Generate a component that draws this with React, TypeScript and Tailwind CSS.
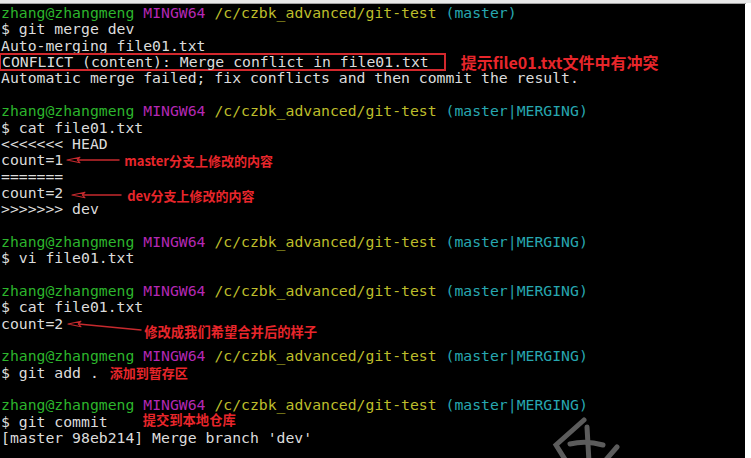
import React from 'react';

const mono = "font-['DejaVu_Sans_Mono','Liberation_Mono',monospace]";
const cn = "font-['Noto_Sans_CJK_SC','Noto_Sans',sans-serif] font-bold leading-none text-[#e8262b]";

const Prompt = ({ branch }: { branch: string }) => (
    <Line>
        <span className="text-[#2cb52c]">zhang@zhangmeng </span>
        <span className="text-[#b428b4]">MINGW64 </span>
        <span className="text-[#bdbd2b]">/c/czbk_advanced/git-test </span>
        <span className="text-[#27a7b0]">({branch})</span>
    </Line>
);

const Line = ({ children }: { children?: React.ReactNode }) => (
    <div className="h-[16.35px] flex items-center whitespace-pre">{children}</div>
);

// thin red arrow pointing left, like the hand-drawn ones
const Arrow = ({ w, slope = 0, className = '' }: { w: number; slope?: number; className?: string }) => (
    <svg width={w} height={12 + slope} className={className} viewBox={`0 0 ${w} ${12 + slope}`}>
        <path d={`M1 6 L14 3.2 L11.5 6 L14 8.8 Z`} fill="none" stroke="#c62a2e" strokeWidth="1.1" strokeLinejoin="round" />
        <path d={`M11.5 6 L${w - 1} ${6 + slope}`} stroke="#c62a2e" strokeWidth="1.5" strokeLinecap="round" />
    </svg>
);

const App = () => {
    return (
        <div className="w-[751px] h-[458px] bg-white flex flex-col overflow-hidden">
            <div className="h-[3px] bg-[#e9e9e9] shrink-0" />
            <div className="h-px bg-[#a3a3a3] mr-[5px] shrink-0" />
            <div className="flex-1 flex">
                <div className={`w-[745px] bg-black relative pl-px pt-px text-[14.78px] text-[#dcdcdc] ${mono}`}>
                    <Prompt branch="master" />
                    <Line>$ git merge dev</Line>
                    <Line>Auto-merging file01.txt</Line>
                    <Line>
                        <span className="inline-flex items-center h-[18px] border-2 border-[#d3282d] -ml-[2px] pl-px pr-[15px]">
                            CONFLICT (content): Merge conflict in file01.txt
                        </span>
                        <span className={`ml-[15px] text-[16px] ${cn}`}>提示file01.txt文件中有冲突</span>
                    </Line>
                    <Line>Automatic merge failed; fix conflicts and then commit the result.</Line>
                    <Line />
                    <Prompt branch="master|MERGING" />
                    <Line>$ cat file01.txt</Line>
                    <Line>{'<<<<<<< HEAD'}</Line>
                    <Line>
                        count=1
                        <Arrow w={54} className="ml-[3px]" />
                        <span className={`ml-[4px] text-[13px] ${cn}`}>master分支上修改的内容</span>
                    </Line>
                    <Line>=======</Line>
                    <Line>
                        count=2
                        <Arrow w={51} className="ml-[8px] translate-y-[2px]" />
                        <span className={`ml-[5px] text-[13px] translate-y-[3px] ${cn}`}>dev分支上修改的内容</span>
                    </Line>
                    <Line>{'>>>>>>> dev'}</Line>
                    <Line />
                    <Prompt branch="master|MERGING" />
                    <Line>$ vi file01.txt</Line>
                    <Line />
                    <Prompt branch="master|MERGING" />
                    <Line>$ cat file01.txt</Line>
                    <Line>
                        count=2
                        <Arrow w={75} slope={6} className="ml-[4px] translate-y-[3px]" />
                        <span className={`ml-[2px] text-[13.3px] translate-y-[8px] ${cn}`}>修改成我们希望合并后的样子</span>
                    </Line>
                    <Line />
                    <Prompt branch="master|MERGING" />
                    <Line>
                        $ git add .
                        <span className={`ml-[11px] text-[13px] ${cn}`}>添加到暂存区</span>
                    </Line>
                    <Line />
                    <Prompt branch="master|MERGING" />
                    <Line>
                        $ git commit
                        <span className={`ml-[35px] text-[13.3px] -translate-y-[2px] ${cn}`}>提交到本地仓库</span>
                    </Line>
                    <Line>[master 98eb214] Merge branch 'dev'</Line>

                    {/* faint watermark logo in the corner */}
                    <svg className="absolute left-[552px] top-[410px]" width="72" height="50" viewBox="0 0 72 50">
                        <g stroke="#5c5c5c" strokeWidth="5" strokeLinecap="round" fill="none">
                            <path d="M32 6 L4 31 L14 47" />
                            <path d="M18 30 Q34 26 51 31" />
                            <path d="M35 13 L37 48" />
                            <path d="M65 33 L52 48" />
                        </g>
                    </svg>
                </div>
                <div className="flex-1 bg-white" />
            </div>
        </div>
    );
};

export default App;
